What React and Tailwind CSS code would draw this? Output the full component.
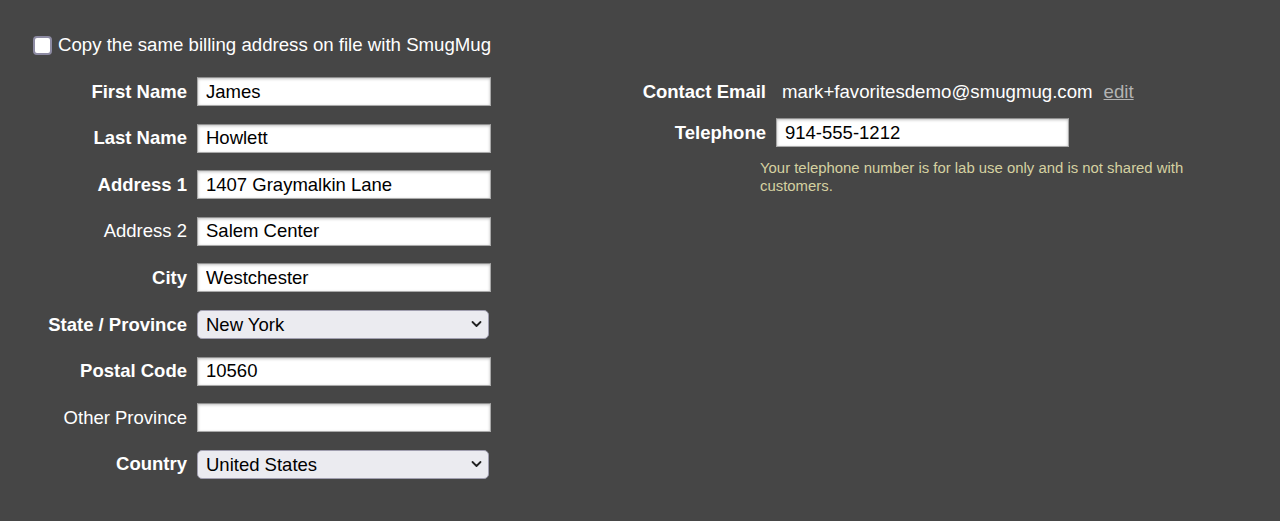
import React from "react"

const fields = [
  { label: "First Name", value: "James", bold: true },
  { label: "Last Name", value: "Howlett", bold: true },
  { label: "Address 1", value: "1407 Graymalkin Lane", bold: true },
  { label: "Address 2", value: "Salem Center" },
  { label: "City", value: "Westchester", bold: true },
  { label: "State / Province", value: "New York", bold: true, select: true },
  { label: "Postal Code", value: "10560", bold: true },
  { label: "Other Province", value: "" },
  { label: "Country", value: "United States", bold: true, select: true },
]

function TextField({ value, width = "w-[294px]" }) {
  return (
    <input
      type="text"
      defaultValue={value}
      className={`h-[29px] ${width} border border-[#a9a9a9] border-t-[#8f8f8f] bg-white px-[8px] text-[18.5px] text-black shadow-[inset_0_1px_3px_rgba(0,0,0,0.25)] outline-none`}
    />
  )
}

function SelectField({ value }) {
  return (
    <div className="relative h-[29px] w-[292px]">
      <select
        defaultValue={value}
        className="h-full w-full appearance-none rounded-[5px] border border-[#a19fb0] bg-[#ebebf0] pl-[8px] pr-8 text-[18.5px] text-black outline-none"
      >
        <option>{value}</option>
      </select>
      <svg
        className="pointer-events-none absolute right-[7px] top-1/2 -translate-y-1/2"
        width="11"
        height="8"
        viewBox="0 0 11 8"
        fill="none"
      >
        <path d="M1.5 2 L5.5 6 L9.5 2" stroke="#222" strokeWidth="1.8" strokeLinecap="round" strokeLinejoin="round" />
      </svg>
    </div>
  )
}

export default function App() {
  return (
    <div className="h-[521px] w-full bg-[#464646] text-white" style={{ fontFamily: '"Liberation Sans", Arial, sans-serif' }}>
      <div className="flex">
        <div className="w-[642px] pl-[33px] pt-[35px]">
          <label className="flex items-center gap-[6px] text-[18.65px] leading-[20px]">
            <span className="block h-[19px] w-[19px] rounded-[4px] border-2 border-[#8d8ba3] bg-white" />
            <span>Copy the same billing address on file with SmugMug</span>
          </label>

          <div className="mt-[22px] grid grid-cols-[154px_294px] auto-rows-[29px] gap-x-[10px] gap-y-[17.6px]">
            {fields.map((f) => (
              <React.Fragment key={f.label}>
                <div className={`flex items-center justify-end whitespace-nowrap text-[18.5px] ${f.bold ? "font-bold" : ""}`}>
                  {f.label}
                </div>
                <div className="flex items-center">
                  {f.select ? <SelectField value={f.value} /> : <TextField value={f.value} />}
                </div>
              </React.Fragment>
            ))}
          </div>
        </div>

        <div className="pt-[77px]">
          <div className="grid grid-cols-[124px_auto] auto-rows-[29px] gap-x-[10px] gap-y-[12px]">
            <div className="flex items-center justify-end whitespace-nowrap text-[18.5px] font-bold">Contact Email</div>
            <div className="flex items-center whitespace-nowrap pl-[6px] text-[18.65px]">
              mark+favoritesdemo@smugmug.com
              <a href="#" className="ml-[11px] text-[#b3b3b3] underline">edit</a>
            </div>
            <div className="flex items-center justify-end whitespace-nowrap text-[18.5px] font-bold">Telephone</div>
            <div className="flex items-center">
              <TextField value="914-555-1212" width="w-[293px]" />
            </div>
          </div>
          <p className="ml-[118px] mt-[12px] w-[450px] text-[14.9px] leading-[18px] text-[#d5d1a1]">
            Your telephone number is for lab use only and is not shared with customers.
          </p>
        </div>
      </div>
    </div>
  )
}
